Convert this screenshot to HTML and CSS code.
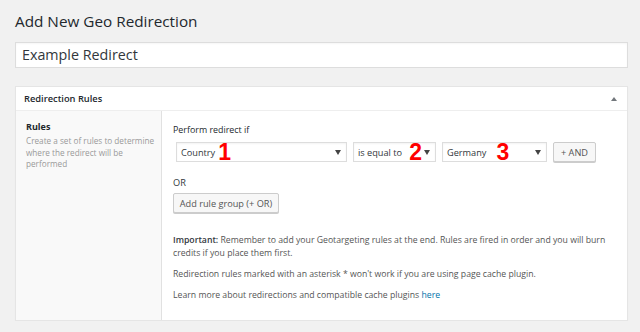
FILE: index.html
```html
<!DOCTYPE html>
<html>
<head>
<meta charset="utf-8">
<link rel="stylesheet" href="styles.css">
</head>
<body>
<div class="wrap">
  <h1 class="page-title">Add New Geo Redirection</h1>
  <div class="title-input">Example Redirect</div>
  <div class="postbox">
    <div class="postbox-head">
      <span class="postbox-title">Redirection Rules</span>
      <span class="toggle"></span>
    </div>
    <div class="postbox-body">
      <div class="side">
        <div class="side-title">Rules</div>
        <div class="side-desc">Create a set of rules to determine where the redirect will be performed</div>
      </div>
      <div class="main">
        <div class="label">Perform redirect if</div>
        <div class="rule-row">
          <div class="select sel-country"><span>Country</span><span class="num">1</span><span class="caret"></span></div>
          <div class="select sel-op"><span>is equal to</span><span class="num num2">2</span><span class="caret"></span></div>
          <div class="select sel-val"><span>Germany</span><span class="num num3">3</span><span class="caret"></span></div>
          <div class="btn btn-and">+ AND</div>
        </div>
        <div class="or">OR</div>
        <div class="btn btn-group">Add rule group (+ OR)</div>
        <p class="note first"><strong>Important:</strong> Remember to add your Geotargeting rules at the end. Rules are fired in order and you will burn credits if you place them first.</p>
        <p class="note">Redirection rules marked with an asterisk * won't work if you are using page cache plugin.</p>
        <p class="note">Learn more about redirections and compatible cache plugins <a href="#">here</a></p>
      </div>
    </div>
  </div>
</div>
</body>
</html>
```
FILE: styles.css
```css
html, body {
  margin: 0;
  padding: 0;
  background: #f1f1f1;
  font-family: "Open Sans", "Noto Sans", sans-serif;
  color: #444;
}
.wrap {
  padding: 0 12px 0 15px;
}
.page-title {
  margin: 0;
  padding-top: 10px;
  height: 42px;
  box-sizing: border-box;
  font-size: 15.3px;
  font-weight: 400;
  color: #23282d;
  line-height: 22px;
}
.title-input {
  height: 26px;
  box-sizing: border-box;
  border: 1px solid #ddd;
  background: #fff;
  font-size: 14.3px;
  line-height: 23px;
  padding-left: 6px;
  color: #32373c;
  box-shadow: inset 0 1px 2px rgba(0,0,0,0.04);
}
.postbox {
  margin-top: 18px;
  background: #fff;
  border: 1px solid #e5e5e5;
  box-shadow: 0 1px 1px rgba(0,0,0,0.04);
}
.postbox-head {
  height: 24px;
  box-sizing: border-box;
  border-bottom: 1px solid #eee;
  display: flex;
  align-items: center;
  justify-content: space-between;
  padding: 0 9px 0 8px;
}
.postbox-title {
  font-size: 9.3px;
  font-weight: 600;
  color: #23282d;
}
.toggle {
  width: 0;
  height: 0;
  border-left: 3px solid transparent;
  border-right: 3px solid transparent;
  border-bottom: 4px solid #72777c;
  margin-right: 1px;
}
.postbox-body {
  display: flex;
  height: 209px;
}
.side {
  width: 146px;
  background: #f9f9f9;
  border-right: 1px solid #e1e1e1;
  padding: 9px 4px 0 10px;
  box-sizing: border-box;
}
.side-title {
  font-size: 9px;
  font-weight: 700;
  color: #23282d;
  line-height: 14px;
}
.side-desc {
  font-size: 8.2px;
  color: #999;
  line-height: 11.5px;
  margin-top: 1px;
}
.main {
  flex: 1;
  padding: 12px 10px 0 11px;
  font-size: 8.8px;
  color: #444;
}
.label {
  font-size: 8.9px;
  font-weight: 400;
  color: #23282d;
  line-height: 14px;
}
.rule-row {
  display: flex;
  gap: 6px;
  margin-top: 5px;
  padding-left: 3px;
}
.select {
  height: 20px;
  box-sizing: border-box;
  border: 1px solid #ddd;
  background: #fff;
  display: flex;
  align-items: center;
  padding: 0 5px 0 4px;
  font-size: 9.2px;
  color: #32373c;
  box-shadow: inset 0 1px 2px rgba(0,0,0,0.05);
}
.sel-country { width: 171px; }
.sel-op { width: 83px; }
.sel-val { width: 105px; }
.num {
  font-family: "Liberation Sans", Arial, sans-serif;
  font-weight: 700;
  font-size: 23px;
  color: #f00;
  line-height: 1;
  margin-left: 3px;
  margin-top: 1px;
}
.num2 { margin-left: 7px; }
.num3 { margin-left: 10px; }
.caret {
  margin-left: auto;
  width: 0;
  height: 0;
  border-left: 3px solid transparent;
  border-right: 3px solid transparent;
  border-top: 5px solid #444;
}
.btn {
  height: 20px;
  box-sizing: border-box;
  border: 1px solid #ccc;
  background: #f7f7f7;
  border-radius: 2px;
  box-shadow: 0 1px 0 #ccc;
  font-size: 9.2px;
  color: #555;
  display: flex;
  align-items: center;
  justify-content: center;
}
.btn-and { width: 43px; }
.or {
  margin-top: 14px;
  font-size: 9.2px;
  color: #32373c;
  line-height: 14px;
}
.btn-group {
  width: 106px;
  margin-top: 3px;
}
.note {
  margin: 8px 0 0 0;
  font-size: 8.7px;
  line-height: 13px;
  color: #555;
}
.note.first { margin-top: 21px; }
.note strong { font-weight: 600; color: #32373c; }
.note a { color: #0073aa; text-decoration: none; }
```
